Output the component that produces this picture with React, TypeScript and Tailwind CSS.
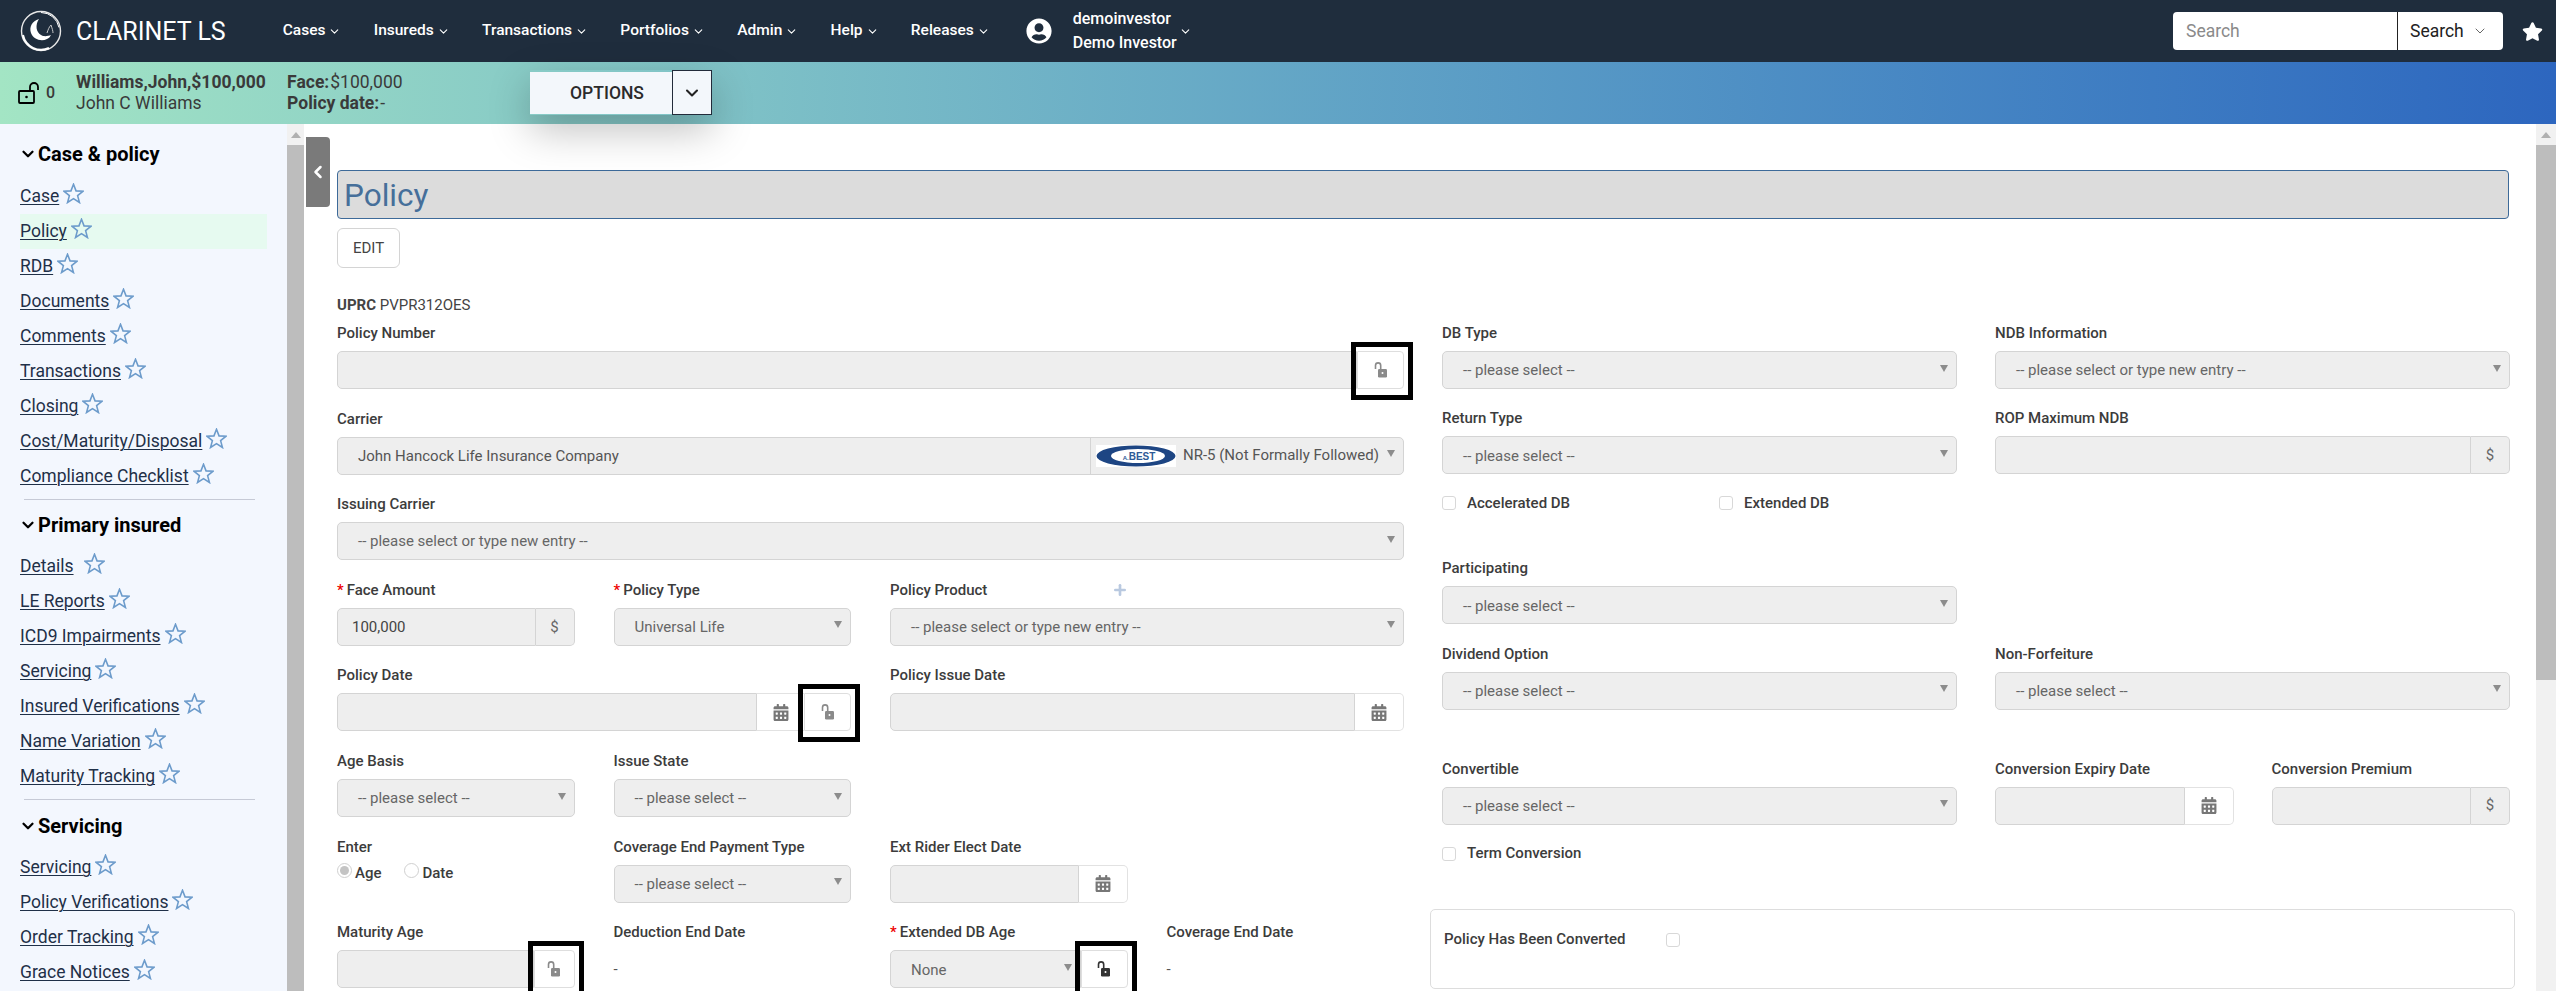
import React from 'react';
import { ChevronDown, ChevronLeft, Plus } from 'lucide-react';
import { FaUserCircle, FaStar, FaCalendarAlt } from 'react-icons/fa';

const font = 'font-["Roboto",sans-serif]';

const sections = [
  {
    title: 'Case & policy',
    items: ['Case', 'Policy', 'RDB', 'Documents', 'Comments', 'Transactions', 'Closing', 'Cost/Maturity/Disposal', 'Compliance Checklist'],
  },
  {
    title: 'Primary insured',
    items: ['Details', 'LE Reports', 'ICD9 Impairments', 'Servicing', 'Insured Verifications', 'Name Variation', 'Maturity Tracking'],
  },
  {
    title: 'Servicing',
    items: ['Servicing', 'Policy Verifications', 'Order Tracking', 'Grace Notices'],
  },
];

const navItems = ['Cases', 'Insureds', 'Transactions', 'Portfolios', 'Admin', 'Help', 'Releases'];

function OpenLock({ className = '', dark = false }: { className?: string; dark?: boolean }) {
  return (
    <svg viewBox="0 0 16 18" className={className} fill="none">
      <path d="M2.5 8V4.5a2.6 2.6 0 0 1 5.2 0V8" stroke={dark ? '#333' : '#8a8a8a'} strokeWidth="1.6" />
      <rect x="5" y="8" width="9" height="8.5" rx="1.2" fill={dark ? '#333' : '#8a8a8a'} />
      <circle cx="9.5" cy="12" r="1" fill="#fff" />
    </svg>
  );
}

function LockBox({ dark = false, className = '' }: { dark?: boolean; className?: string }) {
  return (
    <div className={`relative flex h-[38px] shrink-0 items-center justify-center rounded-r-[4px] border border-[#dedede] bg-white ${className}`}>
      <OpenLock dark={dark} className="h-[18px] w-[16px]" />
      <div className="pointer-events-none absolute -top-[10px] -bottom-[12px] -left-[7px] -right-[10px] border-[5px] border-black" />
    </div>
  );
}

function StarOutline({ className = '' }: { className?: string }) {
  return (
    <svg viewBox="0 0 24 24" className={className} fill="none" stroke="#6c9bcb" strokeWidth="1.8" strokeLinejoin="miter">
      <polygon points="12,1.5 14.9,9 23,9.4 16.7,14.4 18.8,22.3 12,17.8 5.2,22.3 7.3,14.4 1,9.4 9.1,9" />
    </svg>
  );
}

function Arrow() {
  return <span className="mb-[4px] h-0 w-0 border-x-[4px] border-t-[7px] border-x-transparent border-t-[#8c8c8c]" />;
}

function Label({ text, required = false }: { text: string; required?: boolean }) {
  return (
    <div className="mb-[8px] h-[20px] text-[15px] leading-[20px] font-medium text-[#3c3c3c]">
      {required && <span className="text-[#e00] mr-[3px]">*</span>}
      {text}
    </div>
  );
}

function SelectBox({ text = '-- please select --', className = '' }: { text?: string; className?: string }) {
  return (
    <div className={`flex h-[38px] items-center justify-between rounded-[5px] border border-[#d4d4d4] bg-[#eeeeee] pl-[20px] pr-[8px] text-[15px] text-[#666] ${className}`}>
      <span className="pt-[1px]">{text}</span>
      <Arrow />
    </div>
  );
}

function InputBox({ children, className = '' }: { children?: React.ReactNode; className?: string }) {
  return (
    <div className={`flex h-[38px] flex-1 items-center rounded-l-[5px] border border-[#d4d4d4] bg-[#eeeeee] ${className}`}>
      {children}
    </div>
  );
}

function DollarInput({ value }: { value?: string }) {
  return (
    <div className="flex h-[38px]">
      <InputBox className="pl-[14px] text-[15px] text-[#444]">{value}</InputBox>
      <div className="flex w-[39px] items-center justify-center rounded-r-[5px] border border-l-0 border-[#d4d4d4] bg-[#eeeeee] text-[15px] text-[#666]">$</div>
    </div>
  );
}

function CalAddon() {
  return (
    <div className="flex w-[49px] shrink-0 items-center justify-center rounded-r-[5px] border border-l-0 border-[#e2e2e2] bg-white">
      <FaCalendarAlt className="h-[17px] w-[16px] text-[#777]" />
    </div>
  );
}

function DateInput() {
  return (
    <div className="flex h-[38px]">
      <InputBox />
      <CalAddon />
    </div>
  );
}

function Check({ label, className = '' }: { label: string; className?: string }) {
  return (
    <div className={`flex h-[20px] items-center text-[15px] font-medium text-[#3c3c3c] ${className}`}>
      <span className="mr-[11px] h-[14px] w-[14px] rounded-[3px] border border-[#d8d8d8] bg-white" />
      {label}
    </div>
  );
}

function Radio({ label, on = false }: { label: string; on?: boolean }) {
  return (
    <span className="flex items-center text-[15px] font-medium text-[#3c3c3c]">
      <span className="mr-[3px] mb-[4px] flex h-[15px] w-[15px] items-center justify-center rounded-full border border-[#d0d0d0] bg-white">
        {on && <span className="h-[9px] w-[9px] rounded-full bg-[#c4c4c4]" />}
      </span>
      {label}
    </span>
  );
}

function Logo() {
  return (
    <svg viewBox="0 0 44 44" className="h-[44px] w-[44px]" fill="none">
      <circle cx="22" cy="22" r="19.5" stroke="#e8e8e8" strokeWidth="1.4" />
      <path d="M22 3.5a18.5 18.5 0 0 1 18 15" stroke="#fff" strokeWidth="1" />
      <path d="M4 26a18.5 18.5 0 0 0 26 13" stroke="#fff" strokeWidth="2" />
      <path d="M20 10c-7 2-10 8-8 14 2 6 10 9 16 6 2-1 3-2 4-4-3 1-7 2-10 0-5-3-6-10-2-16z" fill="#fff" />
      <path d="M28 24c1-3 2-6 4-8 1 3 2 6 2 8" stroke="#c8c8c8" strokeWidth="1" />
    </svg>
  );
}

function BestLogo() {
  return (
    <svg viewBox="0 0 80 22" className="h-[22px] w-[80px] bg-white">
      <ellipse cx="40" cy="11" rx="39.5" ry="10.5" fill="#1d4583" />
      <ellipse cx="42" cy="11" rx="27" ry="7" fill="#fff" />
      <text x="43" y="14.5" textAnchor="middle" fontWeight="700" fontFamily="Liberation Sans, sans-serif" fill="#2d5a96">
        <tspan fontSize="6">A.</tspan>
        <tspan fontSize="10">BEST</tspan>
      </text>
    </svg>
  );
}

function Sidebar() {
  return (
    <div className="flex h-full w-[304px] shrink-0 overflow-hidden">
      <div className="h-full w-[287px] bg-[#f3f7fe] pt-[20px] pl-[20px]">
        {sections.map((s, i) => (
          <div key={s.title} className={i === 0 ? '' : i === 1 ? 'mt-[15px]' : 'mt-[16px]'}>
            <div className="flex h-[20px] items-center text-[20px] font-bold text-black">
              <ChevronDown className="mr-[1px] -ml-[1px] h-[18px] w-[18px]" strokeWidth={3} />
              {s.title}
            </div>
            <div className={i === 0 ? 'mt-[15px]' : 'mt-[14px]'}>
              {s.items.map((item) => (
                <div key={item} className={`flex h-[35px] w-[247px] items-center ${item === 'Policy' && i === 0 ? 'bg-[#e6faf0]' : ''}`}>
                  <span className="whitespace-nowrap text-[17.5px] text-[#1f3048] underline underline-offset-2 decoration-1">{item}</span>
                  <StarOutline className={`mb-[6px] h-[21px] w-[21px] shrink-0 ${item === 'Details' ? 'ml-[10px]' : 'ml-[4px]'}`} />
                </div>
              ))}
            </div>
            {i < 2 && <div className="mt-[5px] ml-[4px] h-[1px] w-[231px] bg-[#c6cad6]" />}
          </div>
        ))}
      </div>
      <div className="flex h-full w-[17px] flex-col bg-[#f1f1f1]">
        <div className="flex h-[21px] items-center justify-center">
          <span className="h-0 w-0 border-x-[5px] border-b-[6px] border-x-transparent border-b-[#b0b0b0]" />
        </div>
        <div className="flex-1 bg-[#bdbdbd]" />
      </div>
    </div>
  );
}

function LeftForm() {
  return (
    <div className="grid w-[1067px] shrink-0 grid-cols-4 gap-x-[39px] gap-y-[19.3px]">
      <div className="col-span-4">
        <Label text="Policy Number" />
        <div className="flex h-[38px]">
          <InputBox />
          <LockBox className="w-[47px]" />
        </div>
      </div>
      <div className="col-span-4">
        <Label text="Carrier" />
        <div className="flex h-[38px] items-center rounded-[5px] border border-[#d4d4d4] bg-[#eeeeee] pr-[8px] text-[15px] text-[#555]">
          <span className="w-[752px] pl-[20px] pt-[1px]">John Hancock Life Insurance Company</span>
          <span className="flex h-full flex-1 items-center border-l border-[#d4d4d4] pl-[5px]">
            <BestLogo />
            <span className="ml-[7px]">NR-5 (Not Formally Followed)</span>
          </span>
          <Arrow />
        </div>
      </div>
      <div className="col-span-4">
        <Label text="Issuing Carrier" />
        <SelectBox text="-- please select or type new entry --" />
      </div>
      <div>
        <Label text="Face Amount" required />
        <DollarInput value="100,000" />
      </div>
      <div>
        <Label text="Policy Type" required />
        <SelectBox text="Universal Life" />
      </div>
      <div className="col-span-2">
        <div className="mb-[8px] flex h-[20px] w-[238px] items-center justify-between text-[15px] font-medium text-[#3c3c3c]">
          Policy Product
          <Plus className="h-[16px] w-[16px] text-[#b9c9e0]" strokeWidth={4} />
        </div>
        <SelectBox text="-- please select or type new entry --" />
      </div>
      <div className="col-span-2">
        <Label text="Policy Date" />
        <div className="flex h-[38px]">
          <InputBox />
          <div className="flex w-[47px] shrink-0 items-center justify-center border-y border-[#e2e2e2] bg-white">
            <FaCalendarAlt className="h-[17px] w-[16px] text-[#777]" />
          </div>
          <LockBox className="w-[47px]" />
        </div>
      </div>
      <div className="col-span-2">
        <Label text="Policy Issue Date" />
        <DateInput />
      </div>
      <div>
        <Label text="Age Basis" />
        <SelectBox />
      </div>
      <div className="col-span-3">
        <Label text="Issue State" />
        <SelectBox className="w-[237.5px]" />
      </div>
      <div>
        <Label text="Enter" />
        <div className="-mt-[3px] flex gap-[23px]">
          <Radio label="Age" on />
          <Radio label="Date" />
        </div>
      </div>
      <div>
        <Label text="Coverage End Payment Type" />
        <SelectBox />
      </div>
      <div className="col-span-2">
        <Label text="Ext Rider Elect Date" />
        <div className="w-[237.5px]">
          <DateInput />
        </div>
      </div>
      <div>
        <Label text="Maturity Age" />
        <div className="flex h-[38px]">
          <InputBox />
          <LockBox className="w-[41px]" />
        </div>
      </div>
      <div>
        <Label text="Deduction End Date" />
        <div className="flex h-[38px] items-center text-[15px] text-[#555]">-</div>
      </div>
      <div>
        <Label text="Extended DB Age" required />
        <div className="flex h-[38px]">
          <SelectBox text="None" className="flex-1 rounded-r-none pr-[2px]" />
          <LockBox dark className="w-[47px]" />
        </div>
      </div>
      <div>
        <Label text="Coverage End Date" />
        <div className="flex h-[38px] items-center text-[15px] text-[#555]">-</div>
      </div>
    </div>
  );
}

function RightForm() {
  return (
    <div className="w-[1068px] shrink-0">
      <div className="grid grid-cols-4 gap-x-[38px]">
        <div className="col-span-2">
          <Label text="DB Type" />
          <SelectBox />
        </div>
        <div className="col-span-2">
          <Label text="NDB Information" />
          <SelectBox text="-- please select or type new entry --" />
        </div>
        <div className="col-span-2 mt-[19.3px]">
          <Label text="Return Type" />
          <SelectBox />
        </div>
        <div className="col-span-2 mt-[19.3px]">
          <Label text="ROP Maximum NDB" />
          <DollarInput />
        </div>
      </div>
      <div className="mt-[19px] flex">
        <Check label="Accelerated DB" className="w-[277px]" />
        <Check label="Extended DB" />
      </div>
      <div className="mt-[45px] w-[515px]">
        <Label text="Participating" />
        <SelectBox />
      </div>
      <div className="mt-[19.3px] grid grid-cols-2 gap-x-[38px]">
        <div>
          <Label text="Dividend Option" />
          <SelectBox />
        </div>
        <div>
          <Label text="Non-Forfeiture" />
          <SelectBox />
        </div>
      </div>
      <div className="mt-[49px] grid grid-cols-4 gap-x-[38px]">
        <div className="col-span-2">
          <Label text="Convertible" />
          <SelectBox />
        </div>
        <div>
          <Label text="Conversion Expiry Date" />
          <DateInput />
        </div>
        <div>
          <Label text="Conversion Premium" />
          <DollarInput />
        </div>
      </div>
      <Check label="Term Conversion" className="mt-[19px]" />
      <div className="mt-[45px] -ml-[12px] -mr-[5px] flex h-[80px] rounded-[5px] border border-[#dddddd] pt-[20px] pl-[13px]">
        <div className="flex h-[20px] items-center text-[15px] font-medium text-[#3c3c3c]">
          <span className="w-[222px]">Policy Has Been Converted</span>
          <span className="h-[14px] w-[14px] rounded-[3px] border border-[#d8d8d8] bg-white" />
        </div>
      </div>
    </div>
  );
}

export default function App() {
  return (
    <div className={`flex h-[991px] w-[2556px] flex-col overflow-hidden bg-white ${font}`}>
      {/* top nav */}
      <div className="flex h-[62px] shrink-0 items-center bg-[#1f2d3d] pl-[19px] text-white">
        <Logo />
        <span className="ml-[13px] text-[25px] leading-none">CLARINET LS</span>
        <div className="ml-[57px] flex items-center gap-[32.3px]">
          {navItems.map((n) => (
            <span key={n} className="flex items-center text-[15.5px] font-medium">
              {n}
              <ChevronDown className="ml-[3px] h-[13px] w-[13px]" strokeWidth={2} />
            </span>
          ))}
        </div>
        <FaUserCircle className="ml-[36px] h-[26px] w-[26px]" />
        <div className="ml-[21px] text-[16px] leading-[24px] font-medium">
          <div>demoinvestor</div>
          <div>Demo Investor</div>
        </div>
        <ChevronDown className="ml-[2px] h-[13px] w-[13px]" strokeWidth={2} />
        <div className="ml-auto flex h-[38px] w-[330px] rounded-[4px] bg-white text-[17.5px]">
          <span className="flex w-[225px] items-center border-r border-[#222] pl-[13px] text-[#8a8a8a]">Search</span>
          <span className="flex flex-1 items-center pl-[12px] text-[#222]">
            Search
            <ChevronDown className="ml-[8px] h-[16px] w-[16px] text-[#666]" strokeWidth={1.5} />
          </span>
        </div>
        <FaStar className="mr-[13px] ml-[19px] h-[21px] w-[21px]" />
      </div>

      {/* record bar */}
      <div className="relative z-10 flex h-[62px] shrink-0 items-center bg-gradient-to-r from-[#a3e5c4] to-[#2d66bf] pl-[18px] text-[#3a3a3a]">
        <svg viewBox="0 0 22 22" className="h-[22px] w-[22px]" fill="none" stroke="#000" strokeWidth="1.8">
          <rect x="1" y="9" width="15" height="12" rx="1" />
          <path d="M12 9V5a4 4 0 0 1 8 0v3" />
          <circle cx="8.5" cy="15" r="1.3" fill="#000" stroke="none" />
        </svg>
        <span className="ml-[6px] text-[16px] font-medium">0</span>
        <div className="ml-[21px] w-[211px] text-[17.5px] leading-[21px]">
          <div className="font-bold">Williams,John,$100,000</div>
          <div>John C Williams</div>
        </div>
        <div className="text-[17.5px] leading-[21px]">
          <div>
            <span className="mr-[1px] font-bold">Face:</span>$100,000
          </div>
          <div>
            <span className="mr-[1px] font-bold">Policy date:</span>-
          </div>
        </div>
        <div className="absolute top-[8px] left-[530px] flex shadow-[0_15px_40px_rgba(0,0,0,0.25)]">
          <div className="mt-[2px] flex h-[42px] w-[142px] items-center justify-center bg-[#f3f7fb] pl-[12px] text-[17.5px] font-medium text-[#2b2b2b]">OPTIONS</div>
          <div className="flex h-[45px] w-[40px] items-center justify-center border border-[#222b3a] bg-[#f3f7fb]">
            <ChevronDown className="h-[20px] w-[20px] text-[#222]" strokeWidth={2.5} />
          </div>
        </div>
      </div>

      {/* body */}
      <div className="flex min-h-0 flex-1">
        <Sidebar />
        <div className="relative flex-1 overflow-hidden pt-[46px] pl-[33px]">
          <div className="absolute top-[13px] left-[2px] flex h-[70px] w-[24px] items-center justify-center rounded-r-[4px] bg-[#7a7a7a]">
            <ChevronLeft className="h-[20px] w-[20px] text-white" strokeWidth={3} />
          </div>
          <div className="flex h-[49px] w-[2172px] items-center rounded-[4px] border border-[#3d6a99] bg-[#dcdcdc] pt-[2px] pl-[6px] text-[31.5px] text-[#466f9a]">Policy</div>
          <div className="mt-[9px] flex h-[40px] w-[63px] items-center justify-center rounded-[6px] border border-[#d4d4d4] text-[15px] text-[#444]">EDIT</div>
          <div className="mt-[27px] h-[20px] text-[15px] leading-[20px] text-[#444]">
            <span className="font-bold">UPRC</span> PVPR312OES
          </div>
          <div className="mt-[8px] flex gap-[38px]">
            <LeftForm />
            <RightForm />
          </div>
        </div>
        <div className="flex h-full w-[20px] shrink-0 flex-col bg-[#f1f1f1]">
          <div className="flex h-[21px] items-center justify-center">
            <span className="h-0 w-0 border-x-[5px] border-b-[6px] border-x-transparent border-b-[#b0b0b0]" />
          </div>
          <div className="h-[535px] bg-[#bdbdbd]" />
        </div>
      </div>
    </div>
  );
}
